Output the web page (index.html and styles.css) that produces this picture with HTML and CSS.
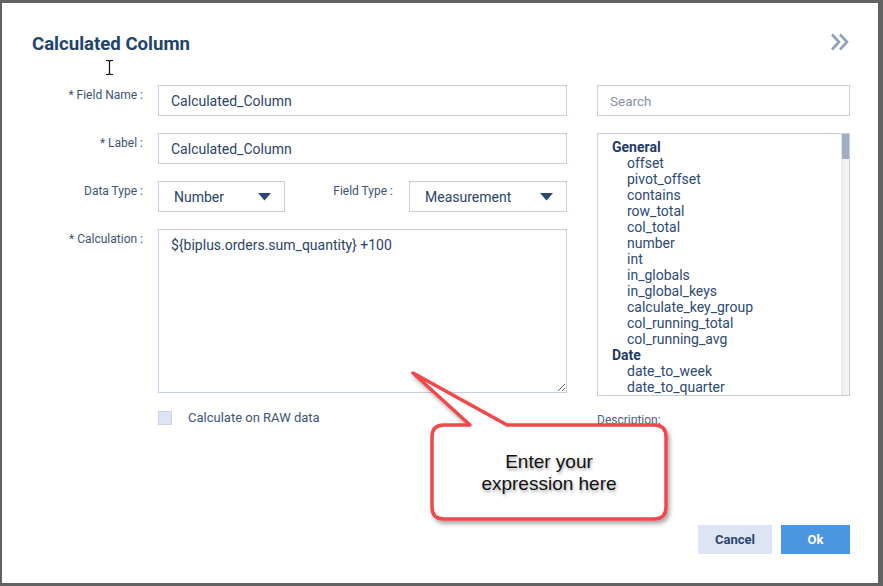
FILE: index.html
```html
<!DOCTYPE html>
<html>
<head>
<meta charset="utf-8">
<link rel="stylesheet" href="styles.css">
</head>
<body>
<div class="dialog">
  <div class="header">
    <h1 class="title">Calculated Column</h1>
    <svg class="collapse" width="20" height="18" viewBox="0 0 20 18">
      <polyline points="2,1.5 9,9 2,16.5" />
      <polyline points="10,1.5 17,9 10,16.5" />
    </svg>
  </div>
  <div class="content">
    <div class="form">
      <div class="row">
        <label class="lbl">* Field Name :</label>
        <div class="input wide">Calculated_Column</div>
      </div>
      <div class="row">
        <label class="lbl">* Label :</label>
        <div class="input wide">Calculated_Column</div>
      </div>
      <div class="row">
        <label class="lbl">Data Type :</label>
        <div class="input select small">
          <span>Number</span>
          <svg width="13" height="8" viewBox="0 0 13 8"><polygon points="0,0 13,0 6.5,7.5"/></svg>
        </div>
        <label class="lbl lbl2">Field Type :</label>
        <div class="input select medium">
          <span>Measurement</span>
          <svg width="13" height="8" viewBox="0 0 13 8"><polygon points="0,0 13,0 6.5,7.5"/></svg>
        </div>
      </div>
      <div class="row">
        <label class="lbl">* Calculation :</label>
        <textarea class="calc" readonly>${biplus.orders.sum_quantity} +100</textarea>
      </div>
      <div class="check-row">
        <span class="checkbox"></span>
        <span class="check-text">Calculate on RAW data</span>
      </div>
    </div>
    <div class="side">
      <div class="input search">Search</div>
      <div class="listbox">
        <div class="list">
          <div class="group">General</div>
          <div class="item">offset</div>
          <div class="item">pivot_offset</div>
          <div class="item">contains</div>
          <div class="item">row_total</div>
          <div class="item">col_total</div>
          <div class="item">number</div>
          <div class="item">int</div>
          <div class="item">in_globals</div>
          <div class="item">in_global_keys</div>
          <div class="item">calculate_key_group</div>
          <div class="item">col_running_total</div>
          <div class="item">col_running_avg</div>
          <div class="group">Date</div>
          <div class="item">date_to_week</div>
          <div class="item">date_to_quarter</div>
        </div>
        <div class="scrollbar"><div class="thumb"></div></div>
      </div>
      <div class="desc">Description:</div>
    </div>
  </div>
  <div class="footer">
    <button class="btn cancel">Cancel</button>
    <button class="btn ok">Ok</button>
  </div>
</div>

<svg class="ibeam" width="9" height="17" viewBox="0 0 9 17">
  <path d="M1 1.5 H3.5 L4.5 2.5 L5.5 1.5 H8 M4.5 2.5 V14.5 M1 15.5 H3.5 L4.5 14.5 L5.5 15.5 H8" />
</svg>

<div class="callout">
  <svg class="callout-shape" width="275" height="170" viewBox="0 0 275 170">
    <defs>
      <filter id="sh" x="-10%" y="-10%" width="130%" height="130%">
        <feDropShadow dx="2" dy="3" stdDeviation="2" flood-color="#000" flood-opacity="0.35"/>
      </filter>
    </defs>
    <path d="M39 60 L65 60 L8 8 L102 60 L249 60 Q261 60 261 72 L261 142 Q261 154 249 154 L39 154 Q27 154 27 142 L27 72 Q27 60 39 60 Z" />
  </svg>
  <div class="callout-text">Enter your<br>expression here</div>
</div>
</body>
</html>
```

FILE: styles.css
```css
* { box-sizing: border-box; }

body {
  margin: 0;
  width: 883px;
  height: 586px;
  overflow: hidden;
  background: #626262;
  font-family: Roboto, "Noto Sans", sans-serif;
  position: relative;
}

.dialog {
  margin: 3px 0 0 2px;
  width: 876px;
  height: 580px;
  background: #fff;
  padding: 29px 28px 29px 30px;
  display: flex;
  flex-direction: column;
}

.header {
  display: flex;
  justify-content: space-between;
  align-items: flex-start;
}

.title {
  margin: 0;
  font-size: 18.6px;
  line-height: 24px;
  font-weight: 700;
  color: #22446b;
}

.collapse {
  margin-top: 1px;
  fill: none;
  stroke: #8ea2bc;
  stroke-width: 2.6;
}

.content {
  display: flex;
  gap: 30px;
  margin-top: 29px;
}

.form {
  width: 535px;
  display: flex;
  flex-direction: column;
  gap: 17px;
}

.row {
  display: flex;
  align-items: flex-start;
}

.lbl {
  width: 111px;
  margin-right: 15px;
  flex-shrink: 0;
  text-align: right;
  font-size: 12px;
  line-height: 16px;
  padding-top: 2px;
  color: #3e5576;
}

.lbl2 {
  width: 124px;
  margin-right: 0;
  padding-right: 16px;
}

.input {
  height: 31px;
  border: 1px solid #c5cfe1;
  background: #fff;
  font-size: 14px;
  color: #2c4468;
  display: flex;
  align-items: center;
  padding: 0 12px;
}

.wide { width: 409px; }

.select {
  justify-content: space-between;
  padding: 0 13px 0 15px;
}

.select svg { fill: #294870; margin-top: 1px; }

.small { width: 127px; }
.medium { width: 158px; }

.calc {
  width: 409px;
  height: 164px;
  margin: 0;
  border: 1px solid #c5cfe1;
  padding: 7px 12px;
  font-family: Roboto, "Noto Sans", sans-serif;
  font-size: 14px;
  line-height: 16px;
  color: #2c4468;
  resize: vertical;
  outline: none;
}

.check-row {
  display: flex;
  align-items: center;
  padding-left: 126px;
  gap: 16px;
}

.checkbox {
  width: 14px;
  height: 14px;
  background: #dde4f3;
  border: 1px solid #cbd3e3;
}

.check-text {
  font-size: 13px;
  color: #3e5576;
}

.side {
  width: 253px;
  display: flex;
  flex-direction: column;
}

.search {
  color: #8893a5;
  font-size: 13.5px;
}

.listbox {
  margin-top: 17px;
  height: 263px;
  border: 1px solid #c5cfe1;
  display: flex;
  overflow: hidden;
}

.list {
  flex: 1;
  padding: 5px 0 0 14px;
  font-size: 14px;
  line-height: 16px;
  color: #2e4a6f;
  overflow: hidden;
}

.group {
  font-weight: 700;
  color: #1f3c62;
}

.item {
  padding-left: 15px;
}

.scrollbar {
  width: 8px;
  background: linear-gradient(to right, #eeeeee, #f6f6f6);
  border-left: 1px solid #e6e6e6;
}

.thumb {
  height: 25px;
  background: #a3aec5;
}

.desc {
  margin-top: 16px;
  font-size: 12px;
  line-height: 16px;
  color: #4a6182;
}

.footer {
  margin-top: auto;
  display: flex;
  justify-content: flex-end;
  gap: 9px;
}

.btn {
  height: 29px;
  border: none;
  font-family: Roboto, "Noto Sans", sans-serif;
  font-size: 13px;
  font-weight: 700;
  padding: 0;
}

.cancel {
  width: 74px;
  background: #dde4f3;
  color: #29466c;
}

.ok {
  width: 69px;
  background: #4a97e0;
  color: #fff;
}

.ibeam {
  position: absolute;
  left: 105px;
  top: 59px;
  fill: none;
  stroke: #111;
  stroke-width: 1.2;
}

.callout {
  position: absolute;
  left: 405px;
  top: 365px;
  width: 275px;
  height: 170px;
}

.callout-shape {
  position: absolute;
  left: 0;
  top: 0;
}

.callout-shape path {
  fill: #fff;
  stroke: #f04a4c;
  stroke-width: 3.5;
  stroke-linejoin: round;
  filter: url(#sh);
}

.callout-text {
  position: absolute;
  left: 27px;
  top: 60px;
  width: 234px;
  height: 96px;
  display: flex;
  align-items: center;
  justify-content: center;
  text-align: center;
  font-family: "Liberation Sans", Arial, sans-serif;
  font-size: 19px;
  line-height: 22px;
  color: #111;
  text-shadow: 1px 2px 3px rgba(0, 0, 0, 0.35);
}
```
